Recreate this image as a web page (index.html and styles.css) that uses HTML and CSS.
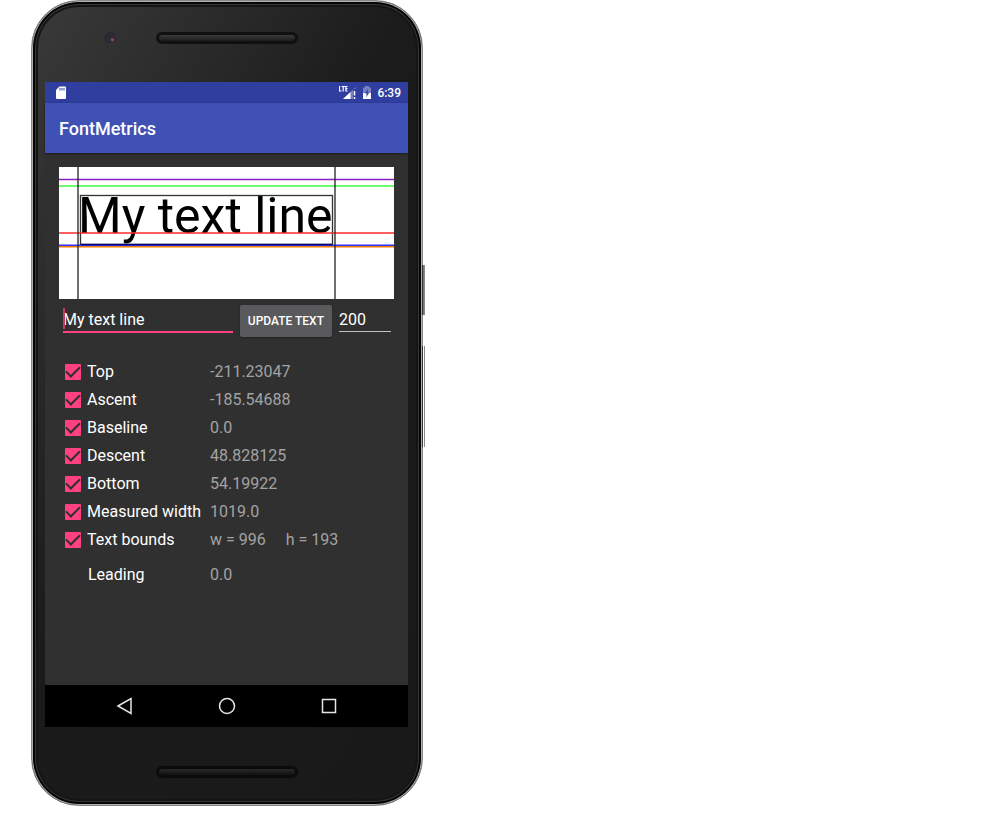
FILE: index.html
```html
<!DOCTYPE html>
<html lang="en">
<head>
<meta charset="utf-8">
<meta name="viewport" content="width=device-width, initial-scale=1">
<title>FontMetrics</title>
<link rel="stylesheet" href="styles.css">
</head>
<body>
<div class="phone">
  <span class="side-key side-key-power"></span>
  <span class="side-key side-key-volume"></span>
  <div class="bezel bezel-top">
    <span class="camera"></span>
    <span class="speaker"></span>
  </div>
  <div class="screen">
    <div class="status-bar">
      <svg class="status-icon" width="12" height="14" viewBox="0 0 12 14" aria-hidden="true">
        <path d="M4.500 0.500H10Q11 .5 11 1.500V12Q11 13 10 13H2Q1 13 1 12V4Z" fill="#fff"/>
        <path d="M5 2v2.500M7 2v2.500M9 2v2.500" stroke="#303f9f" stroke-width="1"/>
      </svg>
      <span class="status-right">
        <svg width="18" height="14" viewBox="0 0 18 14" aria-hidden="true">
          <path d="M16.500 1V13H4Z" fill="#7781c2"/>
          <path d="M11.500 6V13H4Z" fill="#fff"/>
          <path d="M14 3h3v11h-3z" fill="#303f9f"/>
          <path d="M15.500 5v4.500M15.500 11v2" stroke="#fff" stroke-width="1.500"/>
          <path d="M.5 0v5h2M2.500 .5h3.500M4.200 .5v5M8.500 .5H6.800v4.500H8.500M6.800 2.700H8.500" fill="none" stroke="#fff" stroke-width="1.200"/>
        </svg>
        <svg width="10" height="14" viewBox="0 0 10 14" aria-hidden="true">
          <path d="M3 0h4v1.500h2V13H1V1.500h2z" fill="#7781c2"/>
          <path d="M1 7h8v6H1z" fill="#fff"/>
          <path d="M6 2.500L3 7.500h1.800L4.200 11.500L7.200 6.500H5.500z" fill="#303f9f"/>
        </svg>
        <time class="clock">6:39</time>
      </span>
    </div>
    <header class="app-bar"><h1 class="app-title">FontMetrics</h1></header>
    <main class="content">
      <svg class="plot" viewBox="0 0 335 132" role="img" aria-label="Font metrics of the text">
        <rect width="335" height="132" fill="#fff"/>
        <text class="plot-text" x="19" y="66">My text line</text>
        <rect x="21.500" y="28.500" width="252" height="49" fill="none" stroke="#333" stroke-width="1.300"/>
        <path d="M0 12.500H335" stroke="#8a1fc4" stroke-width="1.300"/>
        <path d="M0 19H335" stroke="#3dfa3d" stroke-width="1.700"/>
        <path d="M0 66H335" stroke="#ff2a2a" stroke-width="1.600"/>
        <path d="M0 79.700H335" stroke="#f57c00" stroke-width="1.500"/>
        <path d="M0 78.200H335" stroke="#3030ff" stroke-width="1.600"/>
        <path d="M22 77.500H273" stroke="#00006a" stroke-width="1.500"/>
        <path d="M19 0V132M276 0V132" stroke="#222" stroke-width="1.300"/>
      </svg>
      <form class="controls">
        <input class="field field-text" type="text" value="My text line" aria-label="Text">
        <span class="caret"></span>
        <button class="update" type="button">UPDATE TEXT</button>
        <input class="field field-size" type="text" value="200" aria-label="Text size">
      </form>
      <div class="metrics">
        <div class="metric"><label class="name"><input class="check" type="checkbox" checked>Top</label><output>-211.23047</output></div>
        <div class="metric"><label class="name"><input class="check" type="checkbox" checked>Ascent</label><output>-185.54688</output></div>
        <div class="metric"><label class="name"><input class="check" type="checkbox" checked>Baseline</label><output>0.0</output></div>
        <div class="metric"><label class="name"><input class="check" type="checkbox" checked>Descent</label><output>48.828125</output></div>
        <div class="metric"><label class="name"><input class="check" type="checkbox" checked>Bottom</label><output>54.19922</output></div>
        <div class="metric"><label class="name"><input class="check" type="checkbox" checked>Measured width</label><output>1019.0</output></div>
        <div class="metric"><label class="name"><input class="check" type="checkbox" checked>Text bounds</label><output class="bounds"><span>w = 996</span><span>h = 193</span></output></div>
        <div class="metric metric-leading"><span class="name name-plain">Leading</span><output>0.0</output></div>
      </div>
    </main>
    <nav class="nav-bar">
      <button class="nav-key" type="button" aria-label="Back">
        <svg width="18" height="18" viewBox="0 0 18 18"><path d="M2 9L15 1.500V16.500Z"/></svg>
      </button>
      <button class="nav-key" type="button" aria-label="Home">
        <svg width="18" height="18" viewBox="0 0 18 18"><circle cx="9" cy="9" r="7.500"/></svg>
      </button>
      <button class="nav-key" type="button" aria-label="Recent apps">
        <svg width="18" height="18" viewBox="0 0 18 18"><rect x="2.500" y="2.500" width="13" height="13"/></svg>
      </button>
    </nav>
  </div>
  <div class="bezel bezel-bottom"><span class="speaker"></span></div>
</div>
</body>
</html>
```
FILE: styles.css
```css
* {
  box-sizing: border-box;
}

body {
  margin: 0;
  padding: 0 31px;
  background: #fff;
  font-family: Roboto, "Noto Sans", sans-serif;
  font-size: 16px;
  color: #fff;
}

.phone {
  position: relative;
  width: 100%;
  max-width: 392px;
  padding: 0 14px 0 13px;
  border: 1px solid #858887;
  border-radius: 48px;
  background: linear-gradient(120deg, #3a3a3a 0, #292929 25%, #1b1b1b 45%, #191919 100%);
  box-shadow: inset 0 0 0 1px #b0b0b0, inset 0 0 0 3px #050505, inset 0 0 0 4px #363636, inset 0 0 0 6px #151515;
}

.side-key {
  position: absolute;
  left: 100%;
  width: 3px;
  border: solid #888;
  border-width: 0 1px 0 1px;
  border-left-color: #333;
  background: #777;
}

.side-key-power {
  top: 264px;
  height: 50px;
}

.side-key-volume {
  top: 345px;
  height: 101px;
  background: #fff;
}

.bezel {
  display: flex;
  justify-content: center;
  align-items: center;
  position: relative;
}

.bezel-top {
  height: 81px;
  padding-bottom: 8px;
}

.bezel-bottom {
  height: 78px;
  padding-top: 12px;
}

.speaker {
  width: 142px;
  height: 12px;
  border: 3px solid #101010;
  border-radius: 6px;
  background: linear-gradient(#3a3a3a, #1b1b1b);
}

.bezel-bottom .speaker {
  border-color: #0b0b0b;
  background: linear-gradient(#292929, #101010);
}

.camera {
  position: absolute;
  left: 58px;
  top: 30px;
  width: 14px;
  height: 14px;
  border: 1px solid #343434;
  border-radius: 50%;
  background: radial-gradient(circle at 70% 65%, #8a5058 0 1px, #30293a 2px 4px, #2b2b2b 6px);
}

.screen {
  display: flex;
  flex-direction: column;
  aspect-ratio: 363 / 645;
  background: #303030;
}

.status-bar {
  display: flex;
  justify-content: space-between;
  align-items: center;
  height: 21px;
  padding: 0 7px 0 10px;
  background: #303f9f;
}

.status-right {
  display: flex;
  align-items: center;
  gap: 5px;
}

.clock {
  font-size: 12px;
  font-weight: 500;
}

.app-bar {
  display: flex;
  align-items: center;
  height: 50px;
  padding: 0 14px;
  background: #3f51b5;
  box-shadow: 0 1px 2px #1a1a1a;
}

.app-title {
  margin: 0;
  font-size: 18px;
  font-weight: 500;
}

.content {
  flex: 1;
  padding: 14px;
}

.plot {
  display: block;
  width: 100%;
}

.plot-text {
  font-size: 50px;
  fill: #000;
}

.controls {
  display: flex;
  align-items: flex-start;
  position: relative;
  padding: 6px 3px 0 4px;
}

.field {
  height: 28px;
  padding: 3px 0 0;
  border: 0;
  border-radius: 0;
  outline: 0;
  background: transparent;
  color: #fff;
  font: inherit;
}

.field-text {
  flex: 1;
  min-width: 0;
  border-bottom: 2px solid #ff4081;
}

.field-size {
  width: 52px;
  height: 27px;
  border-bottom: 1px solid #c1c1c1;
}

.caret {
  position: absolute;
  left: 4px;
  top: 9px;
  width: 2px;
  height: 21px;
  background: #c93a6c;
}

.update {
  height: 32px;
  margin: 0 7px;
  padding: 0 8px;
  border: 0;
  border-radius: 2px;
  background: #5a5a5c;
  box-shadow: 0 1px 2px #222;
  color: #fff;
  font: 500 12px Roboto, "Noto Sans", sans-serif;
  white-space: nowrap;
}

.metrics {
  padding: 21px 0 0 6px;
}

.metric {
  display: grid;
  grid-template-columns: 145px 1fr;
  align-items: center;
  min-height: 28px;
  line-height: 20px;
}

.metric output {
  color: #a3a3a3;
}

.metric .bounds {
  display: flex;
  gap: 20px;
}

.metric-leading {
  margin-top: 7px;
}

.name {
  display: flex;
  align-items: center;
  gap: 6px;
  white-space: nowrap;
}

.name-plain {
  padding-left: 23px;
}

.check {
  appearance: none;
  width: 16px;
  height: 16px;
  margin: 0;
  border-radius: 1px;
  background: #ff4081;
  display: grid;
  place-items: center;
}

.check:checked::before {
  content: "";
  width: 12px;
  height: 6px;
  margin-bottom: 4px;
  border: solid #303030;
  border-width: 0 0 2px 2px;
  transform: rotate(-45deg);
}

.nav-bar {
  display: flex;
  justify-content: center;
  gap: 60px;
  height: 42px;
  background: #000;
}

.nav-key {
  display: grid;
  place-items: center;
  width: 42px;
  padding: 0;
  border: 0;
  background: transparent;
}

.nav-key svg {
  fill: none;
  stroke: #e6e6e6;
  stroke-width: 1.5;
}
```
